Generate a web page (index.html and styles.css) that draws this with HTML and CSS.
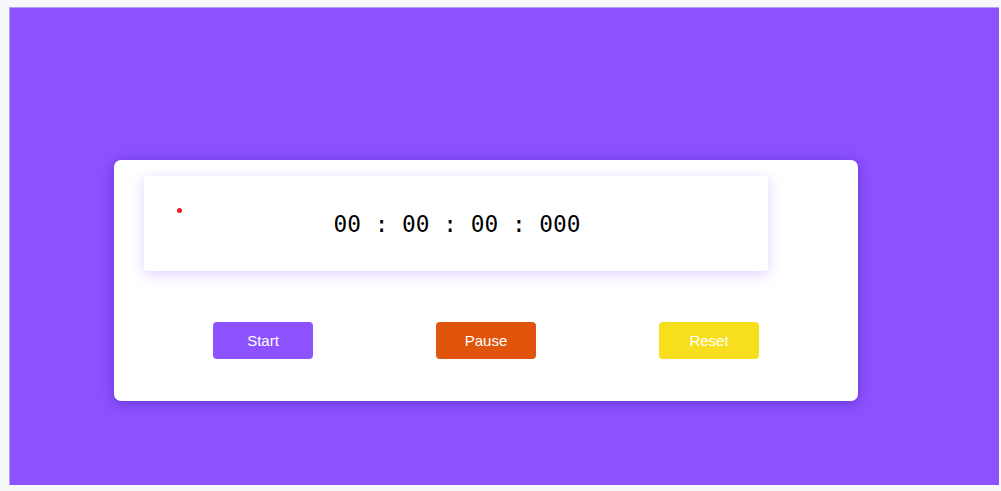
FILE: index.html
```html
<!DOCTYPE html>
<html>
<head>
<meta charset="utf-8">
<link rel="stylesheet" href="styles.css">
</head>
<body>
<div class="frame">
  <div class="card">
    <div class="display">
      <span class="dot"></span>
      <div class="time">00 : 00 : 00 : 000</div>
    </div>
    <div class="buttons">
      <button class="btn start">Start</button>
      <button class="btn pause">Pause</button>
      <button class="btn reset">Reset</button>
    </div>
  </div>
</div>
</body>
</html>
```
FILE: styles.css
```css
html, body {
  margin: 0;
  padding: 0;
  background: #f7f8fa;
}
body {
  width: 1001px;
  height: 491px;
  overflow: hidden;
  font-family: "Liberation Sans", Arial, sans-serif;
}
.frame {
  box-sizing: border-box;
  margin: 7px 0 0 9px;
  width: 990px;
  height: 478px;
  background: #8c52ff;
  border: 1px solid #b49cff;
  border-right: none;
  border-bottom: none;
  padding-top: 152px;
  padding-left: 104px;
}
.card {
  box-sizing: border-box;
  width: 744px;
  height: 241px;
  background: #fff;
  border-radius: 7px;
  box-shadow: 0 2px 14px rgba(60, 20, 150, 0.45);
  padding: 16px 0 0 30px;
}
.display {
  position: relative;
  box-sizing: border-box;
  width: 624px;
  height: 95px;
  background: #fff;
  border-radius: 4px;
  box-shadow: 0 3px 14px rgba(140, 82, 255, 0.28);
  display: flex;
  align-items: center;
  justify-content: center;
}
.dot {
  position: absolute;
  left: 33px;
  top: 32px;
  width: 5px;
  height: 5px;
  border-radius: 50%;
  background: #ee1c1c;
}
.time {
  font-family: "DejaVu Sans Mono", monospace;
  font-size: 22.8px;
  color: #000;
  white-space: pre;
  margin-left: 2px;
  margin-top: 1px;
}
.buttons {
  display: flex;
  gap: 123px;
  margin-top: 51px;
  margin-left: 69px;
}
.btn {
  width: 100px;
  height: 37px;
  border: none;
  border-radius: 4px;
  color: #fff;
  font-family: "Liberation Sans", Arial, sans-serif;
  font-size: 15px;
  padding: 0;
}
.start { background: #8c52ff; }
.pause { background: #e0540c; }
.reset { background: #f7df1e; }
```
